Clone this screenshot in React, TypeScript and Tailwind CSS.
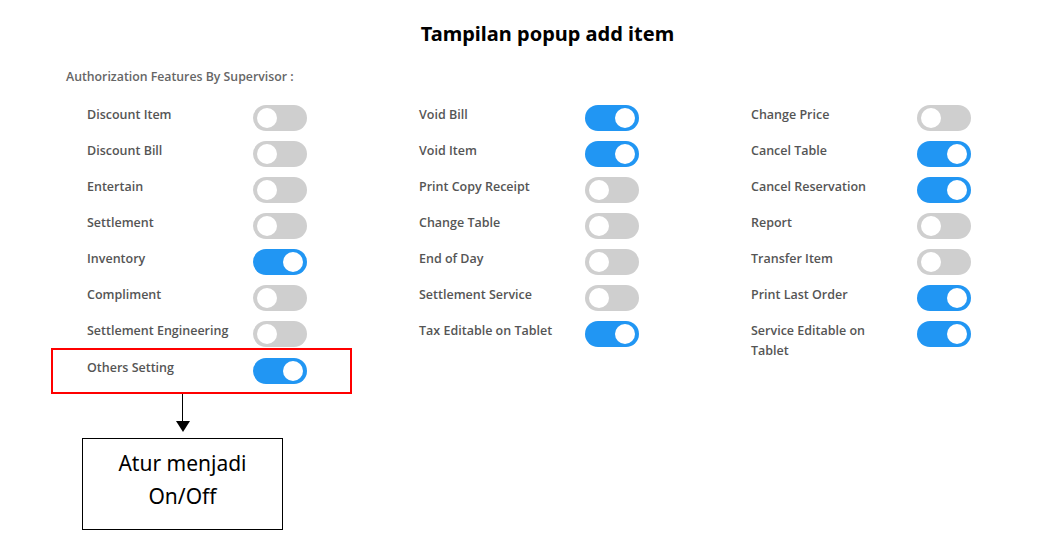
import React from 'react';

type Item = { label: string; on: boolean };

const columns: Item[][] = [
    [
        { label: 'Discount Item', on: false },
        { label: 'Discount Bill', on: false },
        { label: 'Entertain', on: false },
        { label: 'Settlement', on: false },
        { label: 'Inventory', on: true },
        { label: 'Compliment', on: false },
        { label: 'Settlement Engineering', on: false },
    ],
    [
        { label: 'Void Bill', on: true },
        { label: 'Void Item', on: true },
        { label: 'Print Copy Receipt', on: false },
        { label: 'Change Table', on: false },
        { label: 'End of Day', on: false },
        { label: 'Settlement Service', on: false },
        { label: 'Tax Editable on Tablet', on: true },
    ],
    [
        { label: 'Change Price', on: false },
        { label: 'Cancel Table', on: true },
        { label: 'Cancel Reservation', on: true },
        { label: 'Report', on: false },
        { label: 'Transfer Item', on: false },
        { label: 'Print Last Order', on: true },
        { label: 'Service Editable on Tablet', on: true },
    ],
];

function Toggle({ on }: { on: boolean }) {
    return (
        <div
            className={
                on
                    ? 'w-[54px] h-[26px] rounded-full bg-[#2196f3] flex items-center justify-end px-[4px] shrink-0'
                    : 'w-[54px] h-[26px] rounded-full bg-[#cfcfcf] flex items-center justify-start px-[4px] shrink-0'
            }
        >
            <div className="w-[20px] h-[20px] rounded-full bg-white" />
        </div>
    );
}

function Row({ item }: { item: Item }) {
    return (
        <div className="flex items-start h-[36px]">
            <div className="w-[166px] shrink-0 pr-4 text-[12.5px] leading-[20px] text-[#555] font-semibold">
                {item.label}
            </div>
            <Toggle on={item.on} />
        </div>
    );
}

export default function App() {
    return (
        <div
            className="w-[1047px] h-[552px] bg-white relative"
            style={{ fontFamily: '"Open Sans", "Noto Sans", sans-serif' }}
        >
            <h1
                className="text-center pt-[20px] pl-[48px] text-[20px] font-bold text-black leading-[28px]"
                style={{ fontFamily: '"Noto Sans", "Open Sans", sans-serif' }}
            >
                Tampilan popup add item
            </h1>

            <div className="pl-[66px] mt-[20px] text-[12.3px] font-semibold text-[#666]">
                Authorization Features By Supervisor :
            </div>

            <div className="flex pl-[87px] mt-[19px]">
                {columns.map((col, i) => (
                    <div key={i} className="w-[332px] shrink-0 flex flex-col">
                        {col.map((item) => (
                            <Row key={item.label} item={item} />
                        ))}
                    </div>
                ))}
            </div>

            {/* highlighted row */}
            <div className="ml-[51px] -mt-[9px] w-[301px] h-[46px] border-2 border-[#ff0000] flex items-center pl-[34px]">
                <div className="w-[166px] shrink-0 text-[12.5px] text-[#555] font-semibold -mt-[6px]">Others Setting</div>
                <Toggle on={true} />
            </div>

            {/* arrow */}
            <div className="ml-[181px] flex flex-col items-center w-[3px]">
                <div className="w-[1.5px] h-[27px] bg-black" />
                <svg width="14" height="11" viewBox="0 0 14 11" className="shrink-0">
                    <polygon points="0,0 14,0 7,11" fill="black" />
                </svg>
            </div>

            <div
                className="ml-[82px] mt-[6px] w-[201px] h-[92px] border border-black flex flex-col items-center justify-center pb-[8px] text-[21px] leading-[33px] text-black"
                style={{ fontFamily: '"Noto Sans", "Open Sans", sans-serif' }}
            >
                <span>Atur menjadi</span>
                <span>On/Off</span>
            </div>
        </div>
    );
}
